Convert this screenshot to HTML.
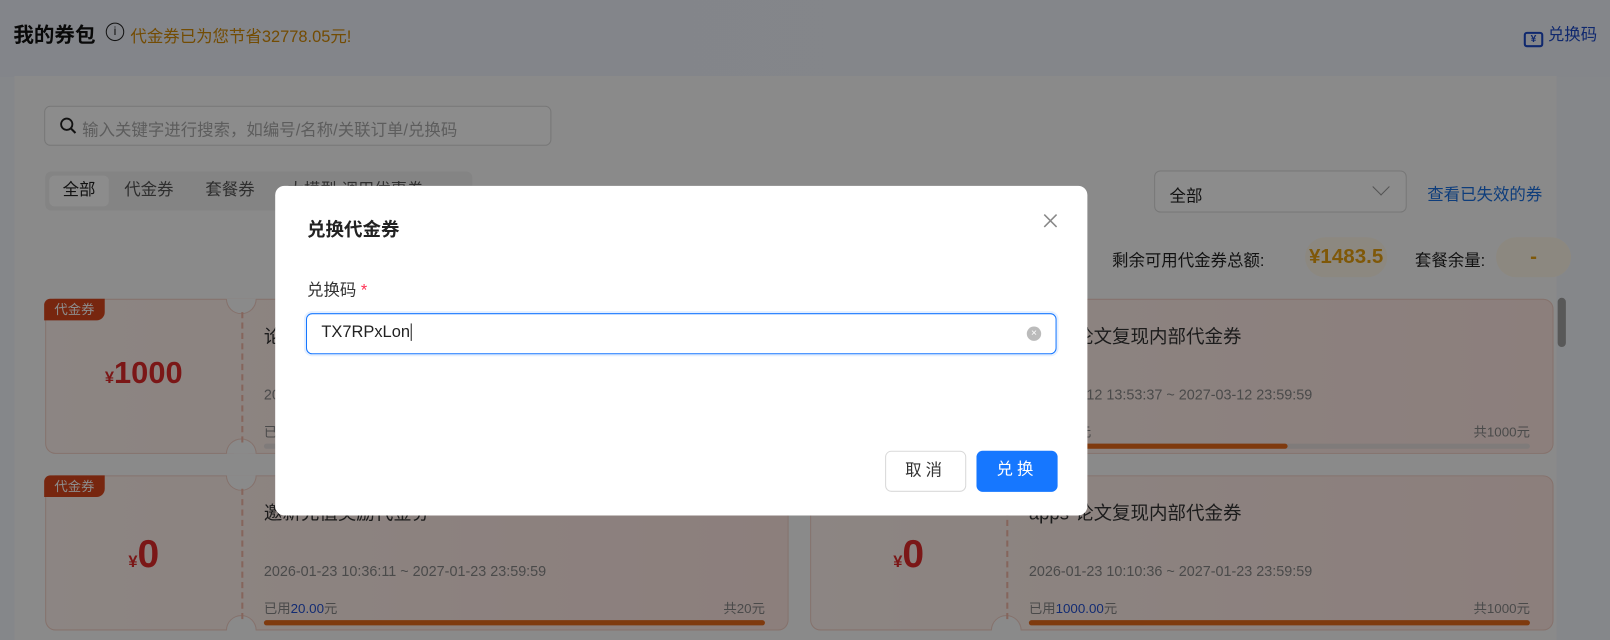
<!DOCTYPE html>
<html><head><meta charset="utf-8"><style>
*{box-sizing:border-box;margin:0;padding:0}
html,body{width:1610px;height:640px;overflow:hidden}
body{position:relative;background:#f3f6fc;font-family:"Liberation Sans","Noto Sans CJK SC",sans-serif;color:#222}
#w{position:absolute;left:0;top:0;width:1568px;height:640px;transform:scale(1.0268);transform-origin:0 0}
.abs{position:absolute}
.hdr{left:0;top:0;width:1610px;height:75px;background:linear-gradient(90deg,#eef2fb,#f1f5fc)}
.panel{left:14px;top:74px;width:1502px;height:580px;background:#fcfcfc}
.search{left:43px;top:103px;width:494px;height:39px;border:1px solid #d9d9d9;border-radius:6px;background:#fff;font-size:16px;color:#aaa;padding:9px 0 0 36px}
.tabs{left:44px;top:167px;width:416px;height:38px;background:#f0f0f0;border-radius:6px}
.tab{top:4px;height:30px;font-size:16px;line-height:30px;color:#555}
.sel{left:1124px;top:166px;width:246px;height:41px;border:1px solid #d9d9d9;border-radius:6px;background:#fff;font-size:16px;padding:10px 14px}
.pill{height:39px;border-radius:20px;background:#fff8ea;color:#e8a010;font-weight:bold;font-size:20px;text-align:center;line-height:39px}
.card{width:724px;height:151px;border:1px solid #f3cfc5;border-radius:10px;background:linear-gradient(90deg,#fff3ee,#ffe7e2)}
.tag{width:59px;height:21px;background:#d9461c;color:#fff;font-size:13px;line-height:21px;text-align:center;border-radius:6px 0 8px 0}
.amt{color:#e02a2a;font-weight:bold;font-size:30px;text-align:center;width:190px}
.amt small{font-size:16px}
.dash{left:190px;top:12px;height:127px;border-left:2px dashed #f3b8a8}
.notch{width:30px;height:15px;background:#fcfcfc;border:1px solid #f3cfc5;left:175px}
.t1{left:212px;top:22px;font-size:18px;color:#333}
.t2{left:212px;top:84px;font-size:14px;color:#888}
.t3{left:212px;top:118px;font-size:13px;color:#888;width:488px}
.bar{left:212px;top:140px;width:488px;height:5px;border-radius:3px;background:#e8e0de}
.mask{left:0;top:0;width:1610px;height:640px;background:rgba(0,0,0,.45)}
.dlg{left:268px;top:181px;width:791px;height:321px;background:#fff;border-radius:9px}
.btn{width:79px;height:40px;border-radius:6px;font-size:16px;text-align:center;line-height:38px;letter-spacing:4px}
</style></head><body>
<div id="w">
<div class="abs hdr"></div>
<div class="abs" style="left:13px;top:18px;font-size:20px;font-weight:bold;color:#111">我的券包</div>
<div class="abs" style="left:103px;top:22px;width:18px;height:18px;border:1.5px solid #222;border-radius:50%;font-size:12px;text-align:center;line-height:15px">i</div>
<div class="abs" style="left:127px;top:22px;font-size:16px;color:#d28a07">代金券已为您节省32778.05元!</div>
<div class="abs" style="left:1484px;top:20px;font-size:16px;color:#1d49c8"><span style="display:inline-block;width:19px;height:15px;border:2px solid #1d49c8;border-radius:3px;vertical-align:-2px;font-size:10px;line-height:11px;text-align:center;font-weight:bold">¥</span> 兑换码</div>
<div class="abs panel"></div>
<div class="abs search"><svg class="abs" style="left:14px;top:10px" width="17" height="17" viewBox="0 0 17 17"><circle cx="7" cy="7" r="5.5" fill="none" stroke="#222" stroke-width="1.8"/><path d="M11 11L15.5 15.5" stroke="#222" stroke-width="2"/></svg>输入关键字进行搜索，如编号/名称/关联订单/兑换码</div>
<div class="abs tabs">
<div class="abs tab" style="left:4px;width:58px;background:#fff;border-radius:5px;text-align:center;color:#222">全部</div>
<div class="abs tab" style="left:77px">代金券</div>
<div class="abs tab" style="left:156px">套餐券</div>
<div class="abs tab" style="left:236px">大模型 调用优惠券</div>
</div>
<div class="abs sel">全部<span class="abs" style="right:18px;top:9px;width:12px;height:12px;border-right:1.5px solid #999;border-bottom:1.5px solid #999;transform:rotate(45deg)"></span></div>
<div class="abs" style="left:1390px;top:176px;font-size:16px;color:#1b6fe0">查看已失效的券</div>
<div class="abs" style="left:1083px;top:240px;font-size:16px">剩余可用代金券总额:</div>
<div class="abs pill" style="left:1271px;top:231px;width:80px">¥1483.5</div>
<div class="abs" style="left:1378px;top:240px;font-size:16px">套餐余量:</div>
<div class="abs pill" style="left:1457px;top:231px;width:73px">-</div>
<div class="abs" style="left:1517px;top:290px;width:8px;height:48px;border-radius:4px;background:#a0a0a0"></div>

<div class="abs card" style="left:44px;top:291px"><div class="abs notch" style="top:-1px;border-radius:0 0 15px 15px;border-top:none"></div><div class="abs notch" style="bottom:-1px;border-radius:15px 15px 0 0;border-bottom:none"></div><div class="abs dash"></div><div class="abs amt" style="top:55px"><small>¥</small>1000</div><div class="abs t1">论文复现内部代金券</div><div class="abs t2">2026-03-12 13:53:37 ~ 2027-03-12 23:59:59</div><div class="abs t3">已用<span style="color:#2450d0">450</span>元</div><div class="abs bar"></div></div>
<div class="abs card" style="left:789px;top:291px"><div class="abs notch" style="top:-1px;border-radius:0 0 15px 15px;border-top:none"></div><div class="abs notch" style="bottom:-1px;border-radius:15px 15px 0 0;border-bottom:none"></div><div class="abs dash"></div><div class="abs t1">apps-论文复现内部代金券</div><div class="abs t2">2026-03-12 13:53:37 ~ 2027-03-12 23:59:59</div><div class="abs t3">已用<span style="color:#2450d0">450</span>元<span style="float:right">共1000元</span></div><div class="abs bar"><div style="width:252px;height:5px;background:#e86b1a;border-radius:3px"></div></div></div>
<div class="abs card" style="left:44px;top:463px"><div class="abs notch" style="top:-1px;border-radius:0 0 15px 15px;border-top:none"></div><div class="abs notch" style="bottom:-1px;border-radius:15px 15px 0 0;border-bottom:none"></div><div class="abs dash"></div><div class="abs amt" style="top:55px"><small>¥</small><span style="font-size:38px">0</span></div><div class="abs t1">邀新充值奖励代金券</div><div class="abs t2">2026-01-23 10:36:11 ~ 2027-01-23 23:59:59</div><div class="abs t3">已用<span style="color:#2450d0">20.00</span>元<span style="float:right">共20元</span></div><div class="abs bar" style="background:#e86b1a"></div></div>
<div class="abs card" style="left:789px;top:463px"><div class="abs notch" style="top:-1px;border-radius:0 0 15px 15px;border-top:none"></div><div class="abs notch" style="bottom:-1px;border-radius:15px 15px 0 0;border-bottom:none"></div><div class="abs dash"></div><div class="abs amt" style="top:55px"><small>¥</small><span style="font-size:38px">0</span></div><div class="abs t1">apps-论文复现内部代金券</div><div class="abs t2">2026-01-23 10:10:36 ~ 2027-01-23 23:59:59</div><div class="abs t3">已用<span style="color:#2450d0">1000.00</span>元<span style="float:right">共1000元</span></div><div class="abs bar" style="background:#e86b1a"></div></div>
<div class="abs tag" style="left:43px;top:291px">代金券</div>
<div class="abs tag" style="left:43px;top:463px">代金券</div>

<div class="abs mask"></div>
<div class="abs dlg">
<div class="abs" style="left:31px;top:29px;font-size:18px;font-weight:bold;color:#222">兑换代金券</div>
<svg class="abs" style="left:748px;top:27px" width="14" height="14" viewBox="0 0 14 14"><path d="M1 1L13 13M13 1L1 13" stroke="#888" stroke-width="1.5"/></svg>
<div class="abs" style="left:31px;top:88px;font-size:16px;color:#333">兑换码 <span style="color:#ff3355">*</span></div>
<div class="abs" style="left:30px;top:124px;width:731px;height:40px;border:1px solid #1677ff;border-radius:6px;box-shadow:0 0 0 2px #e6f0ff;font-size:16px;padding:9px 14px;color:#222">TX7RPxLon<span style="border-left:1px solid #222;margin-left:1px"></span>
<div class="abs" style="right:14px;top:12px;width:14px;height:14px;border-radius:50%;background:#bbb;color:#fff;font-size:10px;line-height:14px;text-align:center">×</div></div>
<div class="abs btn" style="left:594px;top:258px;border:1px solid #d9d9d9;color:#333">取消</div>
<div class="abs btn" style="left:683px;top:258px;background:#1677ff;color:#fff">兑换</div>
</div>
</div>
</body></html>
